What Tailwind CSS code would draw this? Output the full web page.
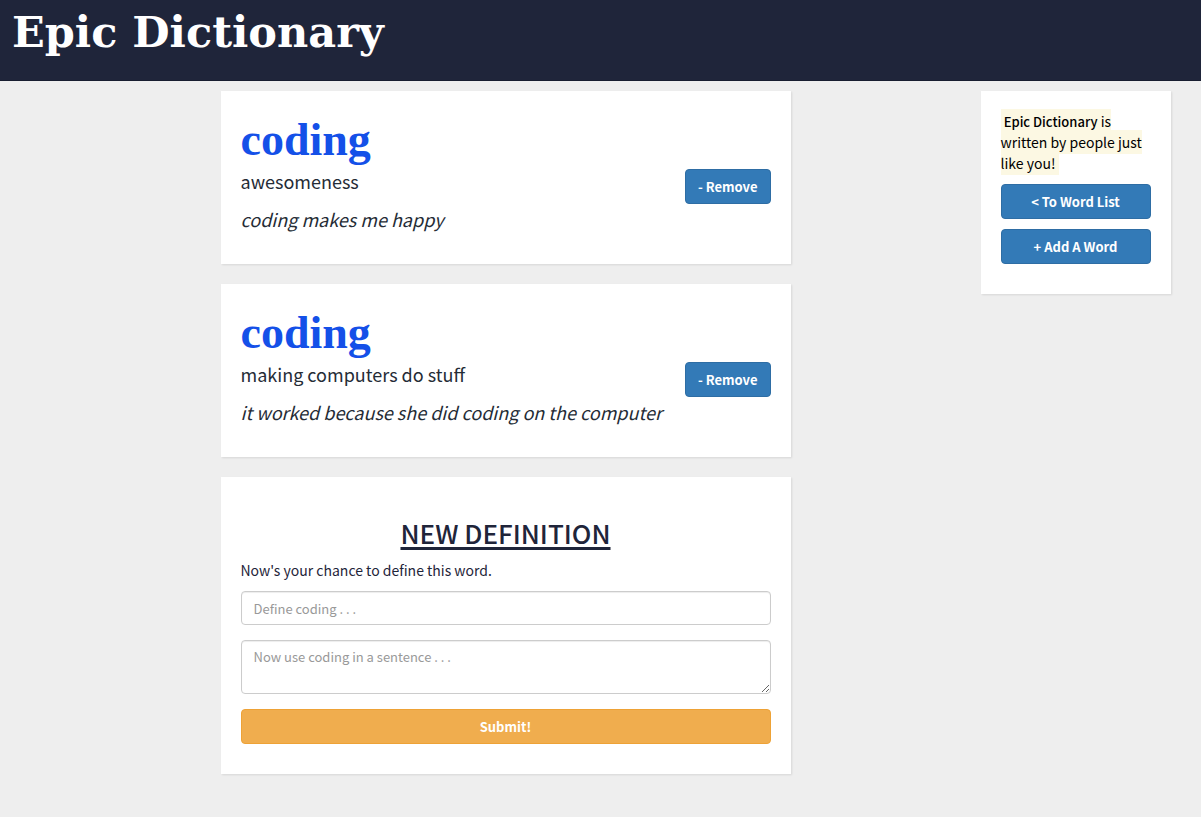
<!DOCTYPE html>
<html lang="en">
<head>
<meta charset="utf-8">
<meta name="viewport" content="width=device-width, initial-scale=1">
<title>Epic Dictionary</title>
<script src="https://cdn.jsdelivr.net/npm/@tailwindcss/browser@4"></script>
</head>
<body class="min-h-screen bg-[#eeeeee] font-['Noto_Sans_CJK_SC',sans-serif] text-[14px] leading-[21px] text-[#1f253a]">
<header class="h-[81px] border-b border-[#181d30] bg-[#1f253a] px-3">
  <h1 class="pt-1 font-['DejaVu_Serif',serif] text-[43px] leading-[56px] font-bold text-white">Epic Dictionary</h1>
</header>
<div class="mx-auto grid max-w-[1140px] grid-cols-12 items-start pt-[10px]">
  <main class="col-span-6 col-start-3 flex flex-col gap-5">
    <article class="bg-white p-5 pb-[33px] shadow-[1px_1px_2px_rgba(0,0,0,0.1)]">
      <h2 class="pt-[4px] font-['Liberation_Serif',serif] text-[46px] leading-[50px] font-bold text-[#1450e8]">coding</h2>
      <div class="flex items-start justify-between pt-1 text-[18px] leading-[24px] text-[#252c36]">
        <div class="flex flex-col gap-[14px]">
          <p>awesomeness</p>
          <p class="italic">coding makes me happy</p>
        </div>
        <button type="button" class="h-[35px] rounded border border-[#2e6da4] bg-[#337ab7] px-3 text-[13px] leading-[21px] font-bold text-white">- Remove</button>
      </div>
    </article>
    <article class="bg-white p-5 pb-[33px] shadow-[1px_1px_2px_rgba(0,0,0,0.1)]">
      <h2 class="pt-[4px] font-['Liberation_Serif',serif] text-[46px] leading-[50px] font-bold text-[#1450e8]">coding</h2>
      <div class="flex items-start justify-between pt-1 text-[18px] leading-[24px] text-[#252c36]">
        <div class="flex flex-col gap-[14px]">
          <p>making computers do stuff</p>
          <p class="italic">it worked because she did coding on the computer</p>
        </div>
        <button type="button" class="h-[35px] rounded border border-[#2e6da4] bg-[#337ab7] px-3 text-[13px] leading-[21px] font-bold text-white">- Remove</button>
      </div>
    </article>
    <form class="flex flex-col bg-white p-5 pb-[30px] shadow-[1px_1px_2px_rgba(0,0,0,0.1)]">
      <h2 class="pt-5 text-center text-[26px] leading-[32px] font-medium underline decoration-[3px] underline-offset-[3px]">NEW DEFINITION</h2>
      <p class="pt-[11px] pb-[10px]">Now's your chance to define this word.</p>
      <input type="text" aria-label="Definition" placeholder="Define coding . . ." class="mb-[15px] h-[34px] w-full rounded border border-[#cccccc] px-3 text-[13px] leading-5 shadow-[inset_0_1px_1px_rgba(0,0,0,0.075)] placeholder:text-[#999999]">
      <textarea rows="2" aria-label="Example sentence" placeholder="Now use coding in a sentence . . ." class="mb-[15px] h-[54px] w-full resize rounded border border-[#cccccc] px-3 py-[6px] text-[13px] leading-5 shadow-[inset_0_1px_1px_rgba(0,0,0,0.075)] placeholder:text-[#999999]"></textarea>
      <button type="submit" class="h-[35px] rounded border border-[#eea236] bg-[#f0ad4e] text-[13px] font-bold text-white">Submit!</button>
    </form>
  </main>
  <aside class="col-span-2 col-start-11 flex flex-col bg-white p-5 pb-[30px] shadow-[1px_1px_2px_rgba(0,0,0,0.1)]">
    <p class="mb-[10px] text-black"><span class="bg-[#fcf8e3] py-[2px]">&nbsp;<strong class="text-[13px] font-medium">Epic Dictionary</strong> is written by people just like you!&nbsp;</span></p>
    <button type="button" class="mb-[10px] h-[35px] rounded border border-[#2e6da4] bg-[#337ab7] text-[13px] font-bold text-white">&lt; To Word List</button>
    <button type="button" class="h-[35px] rounded border border-[#2e6da4] bg-[#337ab7] text-[13px] font-bold text-white">+ Add A Word</button>
  </aside>
</div>
</body>
</html>
